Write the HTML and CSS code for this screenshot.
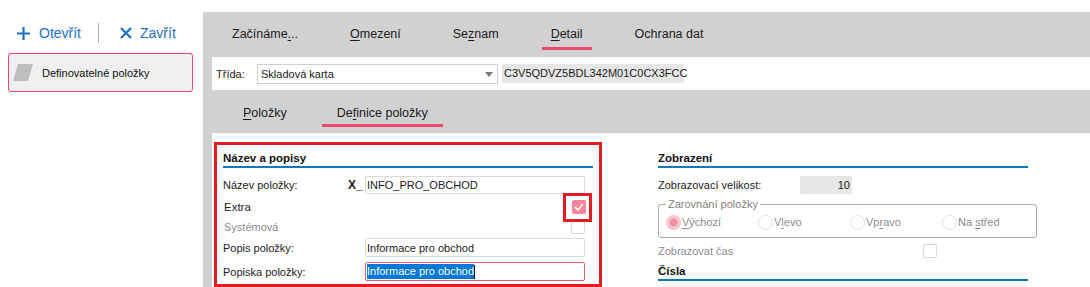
FILE: index.html
```html
<!DOCTYPE html>
<html lang="cs">
<head>
<meta charset="utf-8">
<title>Definovatelné položky</title>
<link rel="stylesheet" href="styles.css">
</head>
<body>
<div class="app">
  <aside class="sidebar">
    <div class="toolbar">
      <span class="tool">
        <svg width="15" height="15" viewBox="0 0 15 15"><path d="M7.5 1v13M1 7.5h13" stroke="#1f6fc5" stroke-width="2.2" fill="none"/></svg>
        Otevřít
      </span>
      <span class="tool-sep"></span>
      <span class="tool">
        <svg width="12" height="12" viewBox="0 0 12 12"><path d="M1 1l10 10M11 1L1 11" stroke="#1f6fc5" stroke-width="2.2" fill="none"/></svg>
        Zavřít
      </span>
    </div>
    <div class="card">
      <svg width="20" height="17" viewBox="0 0 20 17"><polygon points="5,0 20,0 15,17 0,17" fill="#bdbdbd"/></svg>
      <span>Definovatelné položky</span>
    </div>
  </aside>

  <main class="main">
    <nav class="tabs">
      <span class="tab">Začínáme<u>.</u>..</span>
      <span class="tab"><u>O</u>mezení</span>
      <span class="tab">Se<u>z</u>nam</span>
      <span class="tab active"><u>D</u>etail</span>
      <span class="tab">Ochrana dat</span>
    </nav>

    <div class="classrow">
      <span class="class-label">Třída:</span>
      <span class="select"><span>Skladová karta</span><span class="arrow"></span></span>
      <span class="idbox">C3V5QDVZ5BDL342M01C0CX3FCC</span>
    </div>

    <nav class="subtabs">
      <span class="subtab"><u>P</u>oložky</span>
      <span class="subtab active">De<u>f</u>inice položky</span>
    </nav>

    <div class="content">
      <section class="box">
        <div class="sec-head">Název a popisy</div>
        <div class="frow r-name">
          <span>Název položky:</span>
          <span class="xmark">X_</span>
          <span class="inp">INFO_PRO_OBCHOD</span>
        </div>
        <div class="frow r-extra">
          <span class="lbl-extra">Extra</span>
          <span></span>
          <span class="cb on hl"><svg width="10" height="8" viewBox="0 0 10 8"><path d="M1 4l3 3 5-6" stroke="#fff" stroke-width="1.5" fill="none"/></svg></span>
        </div>
        <div class="frow r-sys">
          <span class="muted lbl-extra">Systémová</span>
          <span></span>
          <span class="cb"></span>
        </div>
        <div class="frow r-popis">
          <span>Popis položky:</span>
          <span></span>
          <span class="inp">Informace pro obchod</span>
        </div>
        <div class="frow r-popiska">
          <span>Popiska položky:</span>
          <span></span>
          <span class="inp focus"><span class="sel">Informace pro obchod</span><span class="caret"></span></span>
        </div>
      </section>

      <section class="col">
        <div class="sec-head">Zobrazení</div>
        <div class="rrow">
          <span class="rlabel">Zobrazovací velikost:</span>
          <span class="numbox">10</span>
        </div>
        <fieldset class="group">
          <legend>Zarovnání položky</legend>
          <div class="radios">
            <span class="radio"><span class="rb on"></span><span><u>V</u>ýchozí</span></span>
            <span class="radio"><span class="rb"></span><span>V<u>l</u>evo</span></span>
            <span class="radio"><span class="rb"></span><span>Vp<u>r</u>avo</span></span>
            <span class="radio"><span class="rb"></span><span>Na <u>s</u>třed</span></span>
          </div>
        </fieldset>
        <div class="trow">
          <span class="muted">Zobrazovat čas</span>
          <span class="cb"></span>
        </div>
        <div class="sec-head sec-head2">Čísla</div>
      </section>
    </div>
  </main>
</div>
</body>
</html>
```

FILE: styles.css
```css
* { box-sizing: border-box; }
html, body { margin: 0; padding: 0; }
body {
  width: 1090px;
  height: 287px;
  overflow: hidden;
  background: #fff;
  color: #1b1b1b;
  font-family: "Liberation Sans", Arial, sans-serif;
  font-size: 11px;
}
u { text-decoration: underline; text-underline-offset: 2px; }

.app {
  display: grid;
  grid-template-columns: 203px 1fr;
  height: 287px;
}

/* sidebar */
.toolbar {
  display: flex;
  align-items: center;
  height: 20px;
  margin-top: 23px;
  padding-left: 16px;
}
.tool {
  display: flex;
  align-items: center;
  gap: 8px;
  color: #1f6fc5;
  font-size: 14px;
  line-height: 20px;
}
.tool svg { display: block; }
.tool-sep {
  width: 1px;
  height: 20px;
  background: #a9b3cc;
  margin: 0 21px 0 17px;
}
.card {
  margin: 10px 0 0 8px;
  width: 185px;
  height: 39px;
  border: 1px solid #e9486b;
  border-radius: 3px;
  background: #f0f0f0;
  display: flex;
  align-items: center;
  gap: 9px;
  padding-left: 4px;
  font-size: 11px;
  color: #111;
}
.card svg { display: block; }

/* main */
.main {
  margin-top: 12px;
  background: #d1d1d1;
  padding-left: 9px;
  display: flex;
  flex-direction: column;
  min-width: 0;
}
.tabs {
  display: flex;
  align-items: flex-start;
  height: 45px;
  padding-left: 11px;
  gap: 34px;
  font-size: 12.5px;
}
.tab {
  padding: 13px 9px 4px;
  line-height: 18px;
  border-bottom: 3px solid transparent;
  color: #1b1b1b;
}
.tab.active, .subtab.active { border-bottom-color: #ea4a6c; }

.classrow {
  background: #fff;
  height: 33px;
  display: flex;
  align-items: center;
  padding-left: 4px;
}
.class-label { width: 41px; }
.select {
  width: 241px;
  height: 20px;
  border: 1px solid #cfcfcf;
  display: flex;
  align-items: center;
  justify-content: space-between;
  padding: 0 4px 0 3px;
  margin-top: 1px;
}
.arrow {
  width: 0;
  height: 0;
  border-left: 4px solid transparent;
  border-right: 4px solid transparent;
  border-top: 5px solid #777;
}
.idbox {
  margin-left: 4px;
  width: 182px;
  height: 19px;
  line-height: 19px;
  background: #e6e6e6;
  border-radius: 2px;
  padding-left: 2px;
}

.subtabs {
  display: flex;
  align-items: flex-start;
  height: 43px;
  padding-left: 16px;
  gap: 20px;
  font-size: 12.5px;
}
.subtab {
  padding: 14px 15px 2px;
  line-height: 18px;
  border-bottom: 3px solid transparent;
}

.content {
  flex: 1;
  background: #fff;
  display: flex;
  padding: 9px 0 0 2px;
  gap: 56px;
}

.box {
  width: 388px;
  flex: none;
  border: 3px solid #e31b23;
  padding: 5px 6px 0;
}
.sec-head {
  font-weight: bold;
  font-size: 11.5px;
  line-height: 16px;
  border-bottom: 2px solid #0a78c2;
  color: #111;
}

.frow {
  display: grid;
  grid-template-columns: 125px 17px 220px;
  align-items: center;
}
.r-name { margin-top: 8px; height: 18px; }
.r-extra { height: 26px; }
.r-sys { height: 14px; }
.r-popis { margin-top: 4px; height: 19px; }
.r-popiska { margin-top: 5px; height: 19px; }
.lbl-extra { padding-left: 1px; }
.r-extra .lbl-extra { font-size: 11.5px; }
.xmark { font-weight: bold; font-size: 12px; }
.muted { color: #8b8b8b; }

.inp {
  height: 100%;
  border: 1px solid #d9d9d9;
  border-radius: 2px;
  padding-left: 1px;
  display: flex;
  align-items: center;
  background: #fff;
}
.inp.focus { border-color: #e9566f; }
.sel { background: #0078d7; color: #fff; line-height: 15px; }
.caret { width: 1px; height: 14px; background: #111; }

.cb {
  width: 14px;
  height: 14px;
  border: 1px solid #d8d8d8;
  border-radius: 2px;
  background: #fff;
  justify-self: end;
}
.cb.on {
  background: #f4879c;
  border-color: #f4879c;
  display: flex;
  align-items: center;
  justify-content: center;
  margin-right: -1px;
}
.hl { position: relative; }
.hl::after {
  content: "";
  position: absolute;
  left: -10px;
  top: -8px;
  right: -7px;
  bottom: -9px;
  border: 3px solid #e31b23;
}

/* right column */
.col {
  width: 370px;
  flex: none;
  padding-top: 8px;
}
.rrow {
  margin-top: 8px;
  height: 18px;
  display: flex;
  align-items: center;
}
.rlabel { width: 142px; }
.numbox {
  width: 52px;
  height: 18px;
  line-height: 18px;
  background: #e6e6e6;
  border-radius: 2px;
  text-align: right;
  padding-right: 2px;
}
.group {
  margin: 3px -9px 0 0;
  border: 1px solid #ababab;
  border-radius: 3px;
  padding: 0 0 4px 7px;
}
.group legend {
  padding: 0 2px;
  line-height: 14px;
  color: #7f7f7f;
  font-size: 11px;
}
.radios { display: flex; align-items: center; height: 22px; }
.radio {
  display: flex;
  align-items: center;
  gap: 1px;
  width: 92px;
  color: #8b8b8b;
}
.rb {
  width: 15px;
  height: 15px;
  border-radius: 50%;
  border: 1px solid #dedede;
  background: #fff;
}
.rb.on {
  border-color: #f7bcc8;
  background: radial-gradient(circle, #f28da4 0 3.5px, #f9c9d3 4.5px);
}
.trow {
  margin-top: 5px;
  height: 16px;
  display: grid;
  grid-template-columns: 265px 14px;
  align-items: center;
}
.sec-head2 { margin-top: 4px; }
```
